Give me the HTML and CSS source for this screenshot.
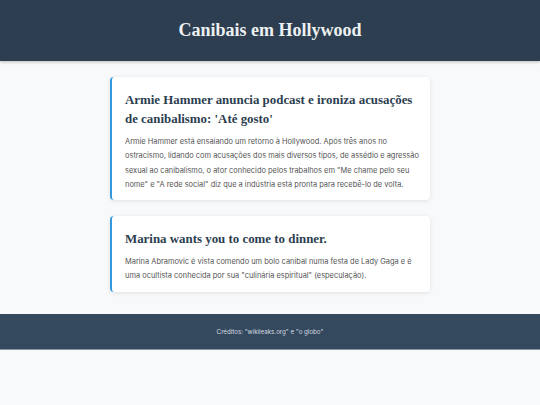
FILE: index.html
```html
<!DOCTYPE html>
<html lang="pt-BR">

<head>
  <meta charset="UTF-8">
  <meta name="viewport" content="width=device-width, initial-scale=1.0">
  <title>Canibais em Hollywood</title>
  <link rel="stylesheet" href="styles.css">
</head>

<body>
  <header class="topo">
    <h1>Canibais em Hollywood</h1>
  </header>

  <main class="noticias">
    <article class="noticia">
      <h2>Armie Hammer anuncia podcast e ironiza acusações de canibalismo: 'Até gosto'</h2>
      <p>Armie Hammer está ensaiando um retorno à Hollywood. Após três anos no ostracismo, lidando com acusações dos mais diversos tipos, de assédio e agressão sexual ao canibalismo, o ator conhecido pelos trabalhos em "Me chame pelo seu nome" e "A rede social" diz que a indústria está pronta para recebê-lo de volta.</p>
    </article>

    <article class="noticia">
      <h2>Marina wants you to come to dinner.</h2>
      <p>Marina Abramovic é vista comendo um bolo canibal numa festa de Lady Gaga e é uma ocultista conhecida por sua "culinária espiritual" (especulação).</p>
    </article>
  </main>

  <footer class="rodape">
    <p>Créditos: "wikileaks.org" e "o globo"</p>
  </footer>
</body>

</html>
```

FILE: styles.css
```css
* {
  margin: 0;
  padding: 0;
  box-sizing: border-box;
}

body {
  background: #f7f9fb;
  font-family: 'Inter', 'Noto Sans', sans-serif;
  color: #555;
}

.topo {
  background: #2c3e50;
  height: 61px;
  display: flex;
  align-items: center;
  justify-content: center;
  box-shadow: 0 1px 3px rgba(0, 0, 0, 0.25);
}

.topo h1 {
  color: #ecf0f1;
  font-family: 'Liberation Serif', 'DejaVu Serif', serif;
  font-size: 18px;
  font-weight: bold;
}

.noticias {
  width: 320px;
  margin: 0 auto;
  padding: 16px 0 22px;
  display: flex;
  flex-direction: column;
  gap: 16px;
}

.noticia {
  background: #fff;
  border-left: 2px solid #3498db;
  border-radius: 4px;
  box-shadow: 0 1px 4px rgba(0, 0, 0, 0.1);
  padding: 14px 9px 8px 13px;
}

.noticia h2 {
  color: #2c3e50;
  font-family: 'Liberation Serif', 'DejaVu Serif', serif;
  font-size: 12.9px;
  font-weight: bold;
  line-height: 19px;
  margin-bottom: 6px;
}

.noticia p {
  font-size: 7.45px;
  line-height: 14.3px;
}

.rodape {
  background: #34495e;
  height: 36px;
  display: flex;
  align-items: center;
  justify-content: center;
  border-bottom: 1px solid #8a96a3;
}

.rodape p {
  color: #d8dde2;
  font-size: 6.2px;
}
```
